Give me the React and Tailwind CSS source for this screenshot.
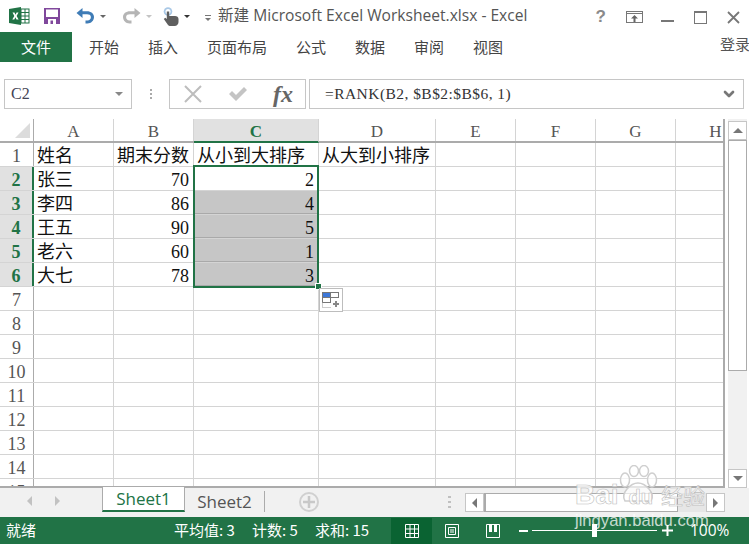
import { ChevronDown } from "lucide-react";

const cjk = '"Noto Sans CJK SC", sans-serif';

const columns = [
  { name: "A", width: "w-[80px]" },
  { name: "B", width: "w-[80px]" },
  { name: "C", width: "w-[125px]" },
  { name: "D", width: "w-[117px]" },
  { name: "E", width: "w-[80px]" },
  { name: "F", width: "w-[80px]" },
  { name: "G", width: "w-[80px]" },
  { name: "H", width: "w-[80px]" },
];

const rows = [
  ["姓名", "期末分数", "从小到大排序", "从大到小排序"],
  ["张三", "70", "2"],
  ["李四", "86", "4"],
  ["王五", "90", "5"],
  ["老六", "60", "1"],
  ["大七", "78", "3"],
];

const ExcelLogo = () => (
  <svg width="21" height="18" viewBox="0 0 21 18">
    <rect x="9" y="2" width="11" height="14" fill="#fff" stroke="#217346" />
    <path d="M12 2v14M16 2v14M9 5.500h11M9 9h11M9 12.500h11" stroke="#217346" />
    <path d="M0 2 12 0v18L0 16z" fill="#217346" />
    <path d="M3.500 5.500h2l1 2.300 1.100-2.300h1.900L7.600 9l2 3.500H7.500L6.400 10.200 5.300 12.500h-2l2-3.500z" fill="#fff" />
  </svg>
);

const SaveIcon = () => (
  <svg width="16" height="16" viewBox="0 0 16 16">
    <rect width="16" height="16" fill="#80489c" />
    <rect x="2" y="1.500" width="12" height="7.500" fill="#fff" />
    <rect x="4" y="11" width="8" height="5" fill="#fff" />
    <rect x="6.500" y="12.500" width="2.500" height="3.500" fill="#80489c" />
  </svg>
);

const UndoIcon = ({ color, flip }) => (
  <svg width="19" height="16" viewBox="0 0 19 16" className={flip ? "-scale-x-100" : ""}>
    <path d="M0.500 5 6.500 0v3.200h4.500c4 0 7 2.200 7 5.800s-3 6.500-6.500 6.500H9.500v-3h2c2 0 3.400-1.500 3.400-3.500S13 6.300 11 6.300H6.500v3.700z" fill={color} />
  </svg>
);

const TouchIcon = () => (
  <svg width="16" height="19" viewBox="0 0 16 19">
    <circle cx="5" cy="4.500" r="4.300" fill="#a9c8e6" />
    <circle cx="5" cy="4.500" r="2.500" fill="#fff" />
    <path d="M3.800 4.500h2.400V9h5.800c2 0 3.500 1 3.500 3v3c0 2-1.500 4-4 4H7.500c-1.500 0-2.500-.8-3-1.800L.800 12 2.300 10.800 3.800 12z" fill="#5f5f5f" />
  </svg>
);

const Caret = ({ color = "#555" }) => (
  <span className="block w-0 h-0 border-x-[3px] border-x-transparent border-t-[3px]" style={{ borderTopColor: color }} />
);

const WindowButtons = () => (
  <div className="absolute right-[9px] top-[9px] flex items-center text-[#777]">
    <span className="text-[17px] leading-[16px] font-bold font-['Liberation_Sans',sans-serif] mr-[20px] text-[#8a8a8a]">?</span>
    <svg width="17" height="13" viewBox="0 0 17 13" className="mr-[18px]">
      <rect x="0.500" y="0.500" width="16" height="11" fill="none" stroke="#777" />
      <path d="M1 2.500h15" stroke="#777" />
      <path d="M8.500 4 5 7.500h2.500V11h2V7.500H12z" fill="#666" />
    </svg>
    <span className="w-[13px] h-[2px] bg-[#777] mt-[7px] mr-[20px]" />
    <svg width="13" height="13" viewBox="0 0 13 13" className="mr-[20px]">
      <rect x="0.500" y="0.500" width="12" height="12" fill="none" stroke="#777" />
      <path d="M1 1.500h11" stroke="#777" />
    </svg>
    <svg width="13" height="13" viewBox="0 0 13 13">
      <path d="M1 1l11 11M12 1 1 12" stroke="#777" strokeWidth="1.800" />
    </svg>
  </div>
);

const TitleBar = () => (
  <div className="h-[32px] flex items-center relative shrink-0">
    <div className="ml-[9px] mt-[-1px]"><ExcelLogo /></div>
    <div className="ml-[14px]"><SaveIcon /></div>
    <div className="ml-[16px]"><UndoIcon color="#3f7cb6" /></div>
    <div className="ml-[5px]"><Caret color="#666" /></div>
    <div className="ml-[16px]"><UndoIcon color="#b5b5b5" flip /></div>
    <div className="ml-[5px]"><Caret color="#c4c4c4" /></div>
    <div className="ml-[11px]"><TouchIcon /></div>
    <div className="ml-[5px]"><Caret color="#333" /></div>
    <div className="ml-[15px] flex flex-col items-center gap-[2px] mt-[3px]">
      <span className="w-[6px] h-px bg-[#777]" />
      <Caret color="#777" />
    </div>
    <span className="ml-[7px] text-[15.600px] text-[#555] font-['Open_Sans','Noto_Sans_CJK_SC',sans-serif] whitespace-nowrap">
      新建 Microsoft Excel Worksheet.xlsx - Excel
    </span>
    <WindowButtons />
  </div>
);

const RibbonTabs = () => (
  <div className="h-[30px] flex items-center shrink-0 text-[15px] text-[#444]" style={{ fontFamily: cjk }}>
    <div className="w-[72px] h-full bg-[#217346] text-white flex items-center justify-center">文件</div>
    <span className="ml-[17px]">开始</span>
    <span className="ml-[29px]">插入</span>
    <span className="ml-[29px]">页面布局</span>
    <span className="ml-[29px]">公式</span>
    <span className="ml-[29px]">数据</span>
    <span className="ml-[29px]">审阅</span>
    <span className="ml-[29px]">视图</span>
    <span className="ml-auto mr-[-1px] text-[#555] mt-[-5px]">登录</span>
  </div>
);

const FormulaBar = () => (
  <div className="h-[30px] mt-[17px] ml-[4px] flex shrink-0 font-['Liberation_Serif',serif] text-[#333]">
    <div className="w-[128px] border border-[#c6c6c6] flex items-center justify-between pl-[6px] pr-[8px] text-[16px]">
      <span className="text-[#445]">C2</span>
      <span className="block w-0 h-0 border-x-[4px] border-x-transparent border-t-[4px] border-t-[#888]" />
    </div>
    <div className="w-[37px] flex flex-col items-center justify-center gap-[2px]">
      <span className="w-[2px] h-[2px] bg-[#aaa]" />
      <span className="w-[2px] h-[2px] bg-[#aaa]" />
      <span className="w-[2px] h-[2px] bg-[#aaa]" />
    </div>
    <div className="w-[137px] border border-[#c6c6c6] flex items-center">
      <svg width="18" height="18" viewBox="0 0 18 18" className="ml-[14px]">
        <path d="M1 1l16 16M17 1 1 17" stroke="#bdbdbd" strokeWidth="2" />
      </svg>
      <svg width="20" height="16" viewBox="0 0 20 16" className="ml-[26px]">
        <path d="M1 8 4 5l4 4 8-8 3 3-11 11z" fill="#c4c4c4" />
      </svg>
      <span className="ml-[25px] text-[24px] leading-none italic font-bold text-[#666]">fx</span>
    </div>
    <div className="w-[435px] ml-[3px] border border-[#c6c6c6] flex items-center pl-[15px] pr-[6px] text-[15.500px] tracking-[0.450px]">
      <span className="flex-1 whitespace-nowrap text-[#333]">=RANK(B2, $B$2:$B$6, 1)</span>
      <ChevronDown size={16} strokeWidth={4} color="#777" />
    </div>
  </div>
);

const Cell = ({ col, children, rowIndex }) => {
  const shaded = col === 2 && rowIndex >= 2 && rowIndex <= 5;
  const alignRight = rowIndex > 0 && (col === 1 || col === 2);
  return (
    <div
      className={`${columns[col].width} shrink-0 h-full border-r border-[#d4d4d4] flex items-center ${alignRight ? "justify-end pr-[4px]" : "pl-[3px]"} ${shaded ? "bg-[#c6c6c6] border-b border-b-[#a9a9a9]" : ""} whitespace-nowrap pt-[3px]`}
    >
      {children}
    </div>
  );
};

const Sheet = () => {
  const allRows = Array.from({ length: 15 }, (_, i) => rows[i] || []);
  return (
    <div className="relative w-[725px] h-[369px] overflow-hidden border-r-2 border-r-[#ababab] border-b-2 border-b-[#ababab]">
      <div className="h-[24px] flex border-b-2 border-[#ababab] font-['Liberation_Serif',serif] text-[17px] text-[#555]">
        <div className="w-[34px] shrink-0 border-r border-[#ababab] relative">
          <span className="absolute right-[3px] bottom-[3px] w-0 h-0 border-l-[15px] border-l-transparent border-b-[15px] border-b-[#dcdcdc]" />
        </div>
        {columns.map((c) => (
          <div
            key={c.name}
            className={`${c.width} shrink-0 flex items-center justify-center border-r border-[#d4d4d4] pt-[3px] ${c.name === "C" ? "bg-[#e1e1e1] text-[#217346] font-bold border-b-2 border-b-[#217346] h-[24px]" : ""}`}
          >
            {c.name}
          </div>
        ))}
      </div>
      {allRows.map((row, i) => {
        const selected = i >= 1 && i <= 5;
        return (
          <div key={i} className="h-[24px] flex border-b border-[#d4d4d4] text-[18px] text-[#111] leading-none">
            <div
              className={`w-[34px] shrink-0 flex items-center justify-center pt-[3px] font-['Liberation_Serif',serif] ${selected ? "bg-[#e1e1e1] text-[#217346] font-bold border-r-2 border-[#217346]" : "text-[#555] border-r border-[#ababab]"}`}
            >
              {i + 1}
            </div>
            {columns.map((c, col) => (
              <Cell key={c.name} col={col} rowIndex={i}>
                <span className="font-['Liberation_Serif','Noto_Sans_CJK_SC',serif]">{row[col]}</span>
              </Cell>
            ))}
          </div>
        );
      })}
      <div className="absolute left-[193px] top-[46px] w-[126px] h-[123px] border-2 border-[#217346]" />
      <div className="absolute left-[315px] top-[164px] w-[7px] h-[7px] bg-[#217346] border border-white" />
      <div className="absolute left-[319px] top-[169px] w-[24px] h-[24px] bg-white border border-[#bdbdbd] flex items-center justify-center">
        <svg width="18" height="16" viewBox="0 0 18 16">
          <rect x="0.500" y="0.500" width="8" height="5" fill="#3d78d8" stroke="#777" />
          <rect x="8.500" y="0.500" width="8" height="5" fill="#fff" stroke="#777" />
          <rect x="0.500" y="5.500" width="8" height="5" fill="#fff" stroke="#777" />
          <path d="M0.500 10.500v5h9" fill="none" stroke="#999" strokeDasharray="1 1" />
          <path d="M14 9v6M11 12h6" stroke="#888" strokeWidth="2" />
        </svg>
      </div>
    </div>
  );
};

const VerticalScroll = () => (
  <div className="w-[24px] h-[369px] pl-[3px] pr-[2px]">
    <div className="h-full bg-[#f1f1f1] flex flex-col">
      <div className="h-[19px] mt-[2px] shrink-0 bg-white border border-[#c6c6c6] flex items-center justify-center">
        <span className="w-0 h-0 border-x-[5px] border-x-transparent border-b-[5px] border-b-[#777]" />
      </div>
      <div className="h-[231px] shrink-0 bg-white border border-[#ababab]" />
      <div className="mt-auto h-[19px] shrink-0 bg-white border border-[#c6c6c6] flex items-center justify-center">
        <span className="w-0 h-0 border-x-[5px] border-x-transparent border-t-[5px] border-t-[#777]" />
      </div>
    </div>
  </div>
);

const TabBar = () => (
  <div className="h-[29px] flex bg-[#f1f1f1] shrink-0 relative">
    <div className="w-[102px] flex items-center pl-[27px] gap-[23px] h-[26px]">
      <span className="w-0 h-0 border-y-[5px] border-y-transparent border-r-[5px] border-r-[#c2c2c2]" />
      <span className="w-0 h-0 border-y-[5px] border-y-transparent border-l-[5px] border-l-[#c2c2c2]" />
    </div>
    <div className="w-[83px] h-[25px] bg-white border-x border-[#ababab] border-b-2 border-b-[#217346] mt-[-1px] flex items-center justify-center text-[17px] text-[#217346] font-['Open_Sans',sans-serif]">
      Sheet1
    </div>
    <div className="w-[80px] h-[21px] mt-[3px] flex items-center justify-center border-r border-[#ababab] text-[17px] text-[#555] font-['Open_Sans',sans-serif]">
      Sheet2
    </div>
    <div className="ml-[34px] mt-[4px] w-[20px] h-[20px] rounded-full border-2 border-[#d0d0d0] flex items-center justify-center">
      <svg width="12" height="12" viewBox="0 0 12 12"><path d="M6 0v12M0 6h12" stroke="#c8c8c8" strokeWidth="2.500" /></svg>
    </div>
    <div className="ml-[129px] mt-[8px] flex flex-col gap-[3px] h-[12px]">
      <span className="w-[3px] h-[3px] bg-[#c0c0c0]" />
      <span className="w-[3px] h-[3px] bg-[#c0c0c0]" />
      <span className="w-[3px] h-[3px] bg-[#c0c0c0]" />
    </div>
    <div className="ml-[14px] mt-[5px] flex h-[19px]">
      <div className="w-[19px] bg-white border border-[#c6c6c6] flex items-center justify-center">
        <span className="w-0 h-0 border-y-[5px] border-y-transparent border-r-[5px] border-r-[#777]" />
      </div>
      <div className="w-[194px] bg-white border border-[#ababab] border-l-2" />
      <div className="w-[28px] bg-[#e6e6e6]" />
      <div className="w-[19px] bg-white border border-[#c6c6c6] flex items-center justify-center">
        <span className="w-0 h-0 border-y-[5px] border-y-transparent border-l-[5px] border-l-[#777]" />
      </div>
    </div>
  </div>
);

const StatusBar = () => (
  <div className="h-[27px] bg-[#217346] flex items-center text-white text-[15px] shrink-0 relative" style={{ fontFamily: cjk }}>
    <span className="ml-[6px] w-[30px] whitespace-nowrap">就绪</span>
    <span className="ml-[138px] w-[61px] whitespace-nowrap">平均值: 3</span>
    <span className="ml-[17px] w-[46px] whitespace-nowrap">计数: 5</span>
    <span className="ml-[17px] w-[55px] whitespace-nowrap">求和: 15</span>
    <div className="ml-[21px] w-[41px] h-[26px] mt-[1px] bg-[#0a6332] flex items-center justify-center">
      <svg width="14" height="14" viewBox="0 0 14 14">
        <path d="M.5.5h13v13H.5zM.5 5h13M.5 9.500h13M5 .5v13M9.500.5v13" fill="none" stroke="#fff" />
      </svg>
    </div>
    <svg width="14" height="14" viewBox="0 0 14 14" className="ml-[13px]">
      <path d="M.5.5h13v13H.5z" fill="none" stroke="#fff" />
      <path d="M3.500 3.500h7v7h-7zM5 6h4M5 8h4" fill="none" stroke="#fff" />
    </svg>
    <svg width="14" height="14" viewBox="0 0 14 14" className="ml-[27px]">
      <path d="M.5.5h13v13H.5z" fill="none" stroke="#fff" />
      <path d="M3 1h3v7H3zM8 1h3v7H8z" fill="#fff" />
    </svg>
    <span className="ml-[19px] w-[9px] h-[2px] bg-white" />
    <div className="ml-[4px] w-[125px] h-px bg-white relative">
      <span className="absolute left-[60px] top-[-6px] w-[5px] h-[13px] bg-white" />
    </div>
    <svg width="11" height="11" viewBox="0 0 11 11" className="ml-[5px]">
      <path d="M5.500 0v11M0 5.500h11" stroke="#fff" strokeWidth="2" />
    </svg>
    <span className="ml-[17px] text-[15.500px] font-['Open_Sans',sans-serif]">100%</span>
  </div>
);

const Watermark = () => (
  <div className="absolute left-[575px] top-[465px] w-[134px] h-[66px] pointer-events-none text-white/75 [-webkit-text-stroke:0.6px_#bdbdbd]">
    <svg width="40" height="38" viewBox="0 0 40 38" className="absolute left-[43px] top-0">
      <g fill="#ffffffb0" stroke="#cfcfcf" strokeWidth="1.500">
        <ellipse cx="7" cy="15" rx="4.500" ry="7" />
        <ellipse cx="16" cy="6" rx="4.500" ry="5.500" />
        <ellipse cx="26" cy="6" rx="4.500" ry="5.500" />
        <ellipse cx="34" cy="15" rx="4.500" ry="7" />
        <path d="M7 36c-5-8 6-18 13-18s18 10 13 18z" />
      </g>
    </svg>
    <div className="absolute left-0 top-[16px] flex items-baseline font-['Liberation_Sans','Noto_Sans_CJK_SC',sans-serif] whitespace-nowrap">
      <span className="text-[28px] leading-[28px] font-bold">Bai</span>
      <span className="ml-[10px] text-[20px] leading-[28px] font-bold">du</span>
      <span className="ml-[8px] text-[22px] leading-[28px]">经验</span>
    </div>
    <div className="absolute left-0 top-[46px] text-[16.600px] leading-[20px] font-['Liberation_Sans',sans-serif] whitespace-nowrap [-webkit-text-stroke:0px]">
      jingyan.baidu.com
    </div>
  </div>
);

export default function App() {
  return (
    <div className="w-[749px] h-[544px] bg-white flex flex-col overflow-hidden relative">
      <TitleBar />
      <RibbonTabs />
      <FormulaBar />
      <div className="flex mt-[10px] shrink-0">
        <Sheet />
        <VerticalScroll />
      </div>
      <TabBar />
      <StatusBar />
      <Watermark />
    </div>
  );
}
